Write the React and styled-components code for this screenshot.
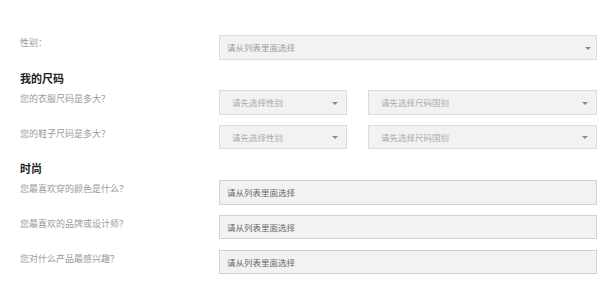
import React from "react";
import styled, { createGlobalStyle } from "styled-components";

const Global = createGlobalStyle`
  html, body { margin: 0; padding: 0; background: #fff; }
  body { font-family: "Noto Sans CJK SC", "Noto Sans", sans-serif; }
`;

const Page = styled.div`
  padding: 35px 12px 0 20px;
  width: 609px;
  box-sizing: border-box;
`;

const Row = styled.div`
  display: grid;
  grid-template-columns: 199px 1fr;
  align-items: start;
  height: 25px;
  margin-bottom: 10px;
`;

const Label = styled.div`
  font-size: 9px;
  line-height: 13px;
  color: #9a9a9a;
  padding-top: ${(p) => p.$top || 1}px;
  white-space: nowrap;
`;

const Heading = styled.div`
  font-size: 11px;
  font-weight: 700;
  line-height: 16px;
  color: #222;
  margin: 1px 0 4px;
`;

const Pair = styled.div`
  display: grid;
  grid-template-columns: 128px 1fr;
  column-gap: 21px;
`;

const Select = styled.div`
  position: relative;
  box-sizing: border-box;
  height: ${(p) => p.$h || 25}px;
  background: #f2f2f2;
  border: 1px solid ${(p) => (p.$dark ? "#d2d2d2" : "#dcdcdc")};
  padding-left: ${(p) => p.$pad || 7}px;
  font-size: 8.5px;
  line-height: ${(p) => (p.$h || 25) - 2}px;
  color: ${(p) => p.$color || "#999"};
  white-space: nowrap;
  overflow: hidden;
`;

const Arrow = styled.span`
  position: absolute;
  right: ${(p) => p.$right || 6}px;
  top: 50%;
  margin-top: -1px;
  width: 0;
  height: 0;
  border-left: 3px solid transparent;
  border-right: 3px solid transparent;
  border-top: 3px solid #8a8a8a;
`;

export default function App() {
  return (
    <>
      <Global />
      <Page>
        <Row>
          <Label>性别：</Label>
          <Select $color="#9a9a9a">
            请从列表里面选择
            <Arrow $right={5} />
          </Select>
        </Row>

        <Heading>我的尺码</Heading>
        <Row>
          <Label $top={2}>您的衣服尺码是多大？</Label>
          <Pair>
            <Select $pad={12} $color="#aaa">
              请先选择性别
              <Arrow $right={8} />
            </Select>
            <Select $pad={12} $color="#aaa">
              请先选择尺码国别
              <Arrow $right={8} />
            </Select>
          </Pair>
        </Row>
        <Row>
          <Label $top={2}>您的鞋子尺码是多大？</Label>
          <Pair>
            <Select $pad={12} $color="#aaa" $h={24}>
              请先选择性别
              <Arrow $right={8} />
            </Select>
            <Select $pad={12} $color="#aaa" $h={24}>
              请先选择尺码国别
              <Arrow $right={8} />
            </Select>
          </Pair>
        </Row>

        <Heading>时尚</Heading>
        <Row>
          <Label $top={2}>您最喜欢穿的颜色是什么？</Label>
          <Select $dark $color="#666">请从列表里面选择</Select>
        </Row>
        <Row>
          <Label $top={2}>您最喜欢的品牌或设计师？</Label>
          <Select $dark $color="#666" $h={24}>请从列表里面选择</Select>
        </Row>
        <Row>
          <Label $top={2}>您对什么产品最感兴趣？</Label>
          <Select $dark $color="#666" $h={24}>请从列表里面选择</Select>
        </Row>
      </Page>
    </>
  );
}
